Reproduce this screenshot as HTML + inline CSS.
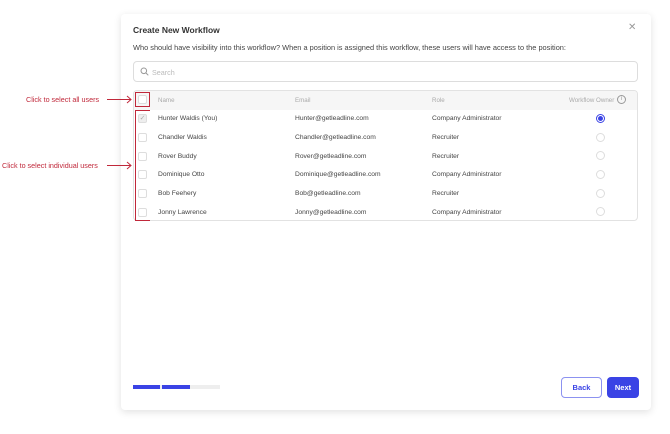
<!DOCTYPE html>
<html><head><meta charset="utf-8"><style>
*{margin:0;padding:0;box-sizing:border-box}
body{width:670px;height:434px;background:#fff;font-family:"Liberation Sans",sans-serif;position:relative;overflow:hidden}
.abs{position:absolute}
.modal{left:121px;top:14px;width:530px;height:396px;background:#fff;border-radius:4px;box-shadow:0 2px 8px rgba(0,0,0,.12)}
.t{font-size:6.7px;color:#444;white-space:nowrap}
.h{font-size:6.2px;color:#aaa;white-space:nowrap}
.cb{width:9px;height:9px;border:1px solid #ddd;border-radius:2px;background:#fff}
.rd{width:9px;height:9px;border:1px solid #ddd;border-radius:50%}
.red{color:#c0283a;font-size:7.2px;white-space:nowrap}
</style></head><body>
<div class="abs modal"></div>
<div class="abs" style="left:133px;top:25px;font-size:8.5px;font-weight:bold;color:#333">Create New Workflow</div>
<div class="abs t" style="left:133px;top:43px;font-size:7.4px">Who should have visibility into this workflow? When a position is assigned this workflow, these users will have access to the position:</div>
<div class="abs" style="left:628px;top:22px;font-size:10px;color:#999">✕</div>
<div class="abs" style="left:133px;top:61px;width:505px;height:21px;border:1px solid #ddd;border-radius:4px"></div>
<svg class="abs" style="left:140px;top:67px" width="9" height="9"><circle cx="3.8" cy="3.8" r="2.8" fill="none" stroke="#999" stroke-width="1"/><line x1="6" y1="6" x2="8.3" y2="8.3" stroke="#999"/></svg>
<div class="abs h" style="left:152px;top:67.5px;font-size:7.2px;color:#bbb">Search</div>
<div class="abs" style="left:133px;top:90px;width:505px;height:131px;border:1px solid #e2e2e2;border-radius:4px;overflow:hidden"><div style="height:19px;background:#f6f6f6"></div></div>
<div class="abs cb" style="left:138px;top:95px"></div>
<div class="abs h" style="left:158px;top:97px">Name</div>
<div class="abs h" style="left:295px;top:97px">Email</div>
<div class="abs h" style="left:432px;top:97px">Role</div>
<div class="abs h" style="left:569px;top:97px">Workflow Owner</div>
<div class="abs" style="left:617px;top:95px;width:9px;height:9px;border:1px solid #999;border-radius:50%;font-size:6px;color:#999;text-align:center;line-height:7px">i</div>

<div class="abs cb" style="left:138px;top:114px;background:#eee;color:#aaa;font-size:7px;line-height:7px;text-align:center">✓</div>
<div class="abs t" style="left:158px;top:115px">Hunter Waldis (You)</div><div class="abs t" style="left:295px;top:115px">Hunter@getleadline.com</div><div class="abs t" style="left:432px;top:115px">Company Administrator</div>
<div class="abs rd" style="left:596px;top:114px;border-color:#3a43e5;background:radial-gradient(circle,#3a43e5 2.2px,#fff 2.7px)"></div>

<div class="abs cb" style="left:138px;top:133px"></div><div class="abs t" style="left:158px;top:134px">Chandler Waldis</div><div class="abs t" style="left:295px;top:134px">Chandler@getleadline.com</div><div class="abs t" style="left:432px;top:134px">Recruiter</div><div class="abs rd" style="left:596px;top:133px"></div>
<div class="abs cb" style="left:138px;top:152px"></div><div class="abs t" style="left:158px;top:153px">Rover Buddy</div><div class="abs t" style="left:295px;top:153px">Rover@getleadline.com</div><div class="abs t" style="left:432px;top:153px">Recruiter</div><div class="abs rd" style="left:596px;top:151px"></div>
<div class="abs cb" style="left:138px;top:170px"></div><div class="abs t" style="left:158px;top:171px">Dominique Otto</div><div class="abs t" style="left:295px;top:171px">Dominique@getleadline.com</div><div class="abs t" style="left:432px;top:171px">Company Administrator</div><div class="abs rd" style="left:596px;top:170px"></div>
<div class="abs cb" style="left:138px;top:189px"></div><div class="abs t" style="left:158px;top:190px">Bob Feehery</div><div class="abs t" style="left:295px;top:190px">Bob@getleadline.com</div><div class="abs t" style="left:432px;top:190px">Recruiter</div><div class="abs rd" style="left:596px;top:189px"></div>
<div class="abs cb" style="left:138px;top:208px"></div><div class="abs t" style="left:158px;top:209px">Jonny Lawrence</div><div class="abs t" style="left:295px;top:209px">Jonny@getleadline.com</div><div class="abs t" style="left:432px;top:209px">Company Administrator</div><div class="abs rd" style="left:596px;top:207px"></div>

<div class="abs" style="left:135px;top:92px;width:15px;height:15px;border:1px solid #c0283a"></div>
<div class="abs" style="left:135px;top:110px;width:15px;height:111px;border:1px solid #c0283a;border-right:none"></div>
<div class="abs red" style="left:26px;top:95px">Click to select all users</div>
<div class="abs red" style="left:2px;top:161px">Click to select individual users</div>
<svg class="abs" style="left:105px;top:94px" width="30" height="76"><path d="M2 5.5H26M22 2L26 5.5L22 9" stroke="#c0283a" fill="none"/><path d="M2 71.5H26M22 68L26 71.5L22 75" stroke="#c0283a" fill="none"/></svg>

<div class="abs" style="left:133px;top:385px;width:87px;height:4px;background:#eee"></div>
<div class="abs" style="left:133px;top:385px;width:27px;height:4px;background:#3a43e5"></div>
<div class="abs" style="left:162px;top:385px;width:28px;height:4px;background:#3a43e5"></div>
<div class="abs" style="left:561px;top:377px;width:41px;height:21px;border:1px solid #8c92f0;border-radius:4px;color:#3a43e5;font-size:7.5px;font-weight:bold;text-align:center;line-height:19px">Back</div>
<div class="abs" style="left:607px;top:377px;width:32px;height:21px;background:#3a43e5;border-radius:4px;color:#fff;font-size:7.5px;font-weight:bold;text-align:center;line-height:21px">Next</div>
</body></html>
